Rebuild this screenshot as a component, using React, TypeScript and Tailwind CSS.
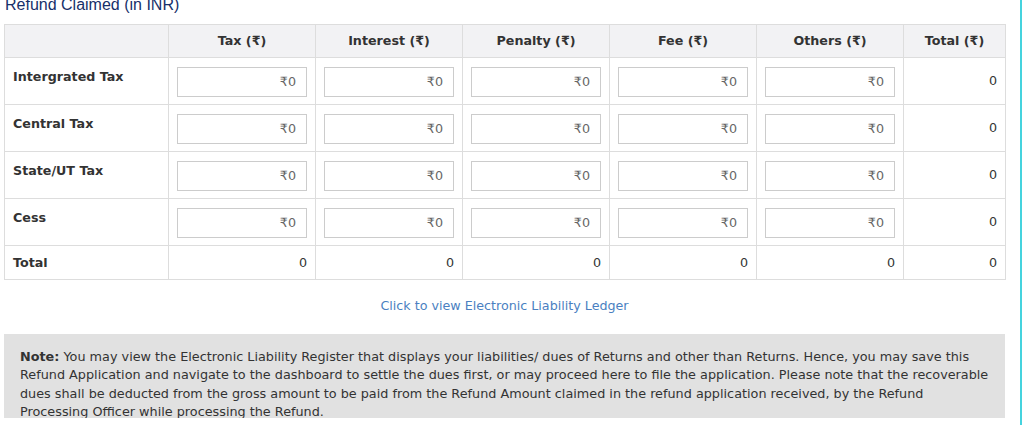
import React from 'react';

const rows = ['Intergrated Tax', 'Central Tax', 'State/UT Tax', 'Cess'];
const heads = ['Tax (₹)', 'Interest (₹)', 'Penalty (₹)', 'Fee (₹)', 'Others (₹)'];

const font = { fontFamily: '"DejaVu Sans", Verdana, sans-serif' };

export default function App() {
  return (
    <div className="h-[425px] w-[1022px] overflow-hidden border-r-2 border-[#45d3de] bg-white pl-[4px]">
      <div className="w-[1001px]">
        {/* Section heading, clipped at top */}
        <h2 className="-mt-[5px] mb-[9px] pl-[1px] text-[16px] leading-[20px] text-[#17306a] font-['Liberation_Sans',Arial,sans-serif]">
          Refund Claimed (in INR)
        </h2>

        <table className="w-[1001px] table-fixed border-collapse text-[12.7px] text-[#333]" style={font}>
          <colgroup>
            <col className="w-[164px]" />
            {heads.map((h) => (
              <col key={h} className="w-[147px]" />
            ))}
            <col className="w-[102px]" />
          </colgroup>
          <thead>
            <tr className="h-[33px] bg-[#f2f2f4]">
              <th className="border border-[#dddddd]" />
              {heads.map((h) => (
                <th key={h} className="border border-[#dddddd] text-center font-bold">
                  {h}
                </th>
              ))}
              <th className="border border-[#dddddd] text-center font-bold">Total (₹)</th>
            </tr>
          </thead>
          <tbody>
            {rows.map((r) => (
              <tr key={r} className="h-[47px]">
                <td className="border border-[#dddddd] px-[8px] pt-[10px] align-top font-bold leading-[17px]">{r}</td>
                {heads.map((h) => (
                  <td key={h} className="border border-[#dddddd] px-[8px] pt-[9px] pb-[7px] align-top">
                    <div className="flex h-[30px] w-[130px] items-center justify-end border border-[#cccccc] bg-white pr-[10px] text-[#666]">
                      ₹0
                    </div>
                  </td>
                ))}
                <td className="border border-[#dddddd] px-[8px] text-right align-middle">0</td>
              </tr>
            ))}
            <tr className="h-[34px]">
              <td className="border border-[#dddddd] px-[8px] font-bold">Total</td>
              {heads.map((h) => (
                <td key={h} className="border border-[#dddddd] px-[8px] text-right">
                  0
                </td>
              ))}
              <td className="border border-[#dddddd] px-[8px] text-right">0</td>
            </tr>
          </tbody>
        </table>

        <div className="mt-[17px] text-center text-[12.7px] leading-[17px] text-[#4a7fc1]" style={font}>
          Click to view Electronic Liability Ledger
        </div>

        {/* Note box */}
        <div
          className="mt-[20px] h-[84px] overflow-hidden bg-[#e1e1e1] pl-[16px] pr-[12px] pt-[14px] text-[12.8px] leading-[18.33px] text-[#333]"
          style={font}
        >
          <p>
            <b>Note:</b> You may view the Electronic Liability Register that displays your liabilities/ dues of Returns and
            other than Returns. Hence, you may save this Refund Application and navigate to the dashboard to settle the dues
            first, or may proceed here to file the application. Please note that the recoverable dues shall be deducted from
            the gross amount to be paid from the Refund Amount claimed in the refund application received, by the Refund
            Processing Officer while processing the Refund.
          </p>
        </div>
      </div>
    </div>
  );
}
